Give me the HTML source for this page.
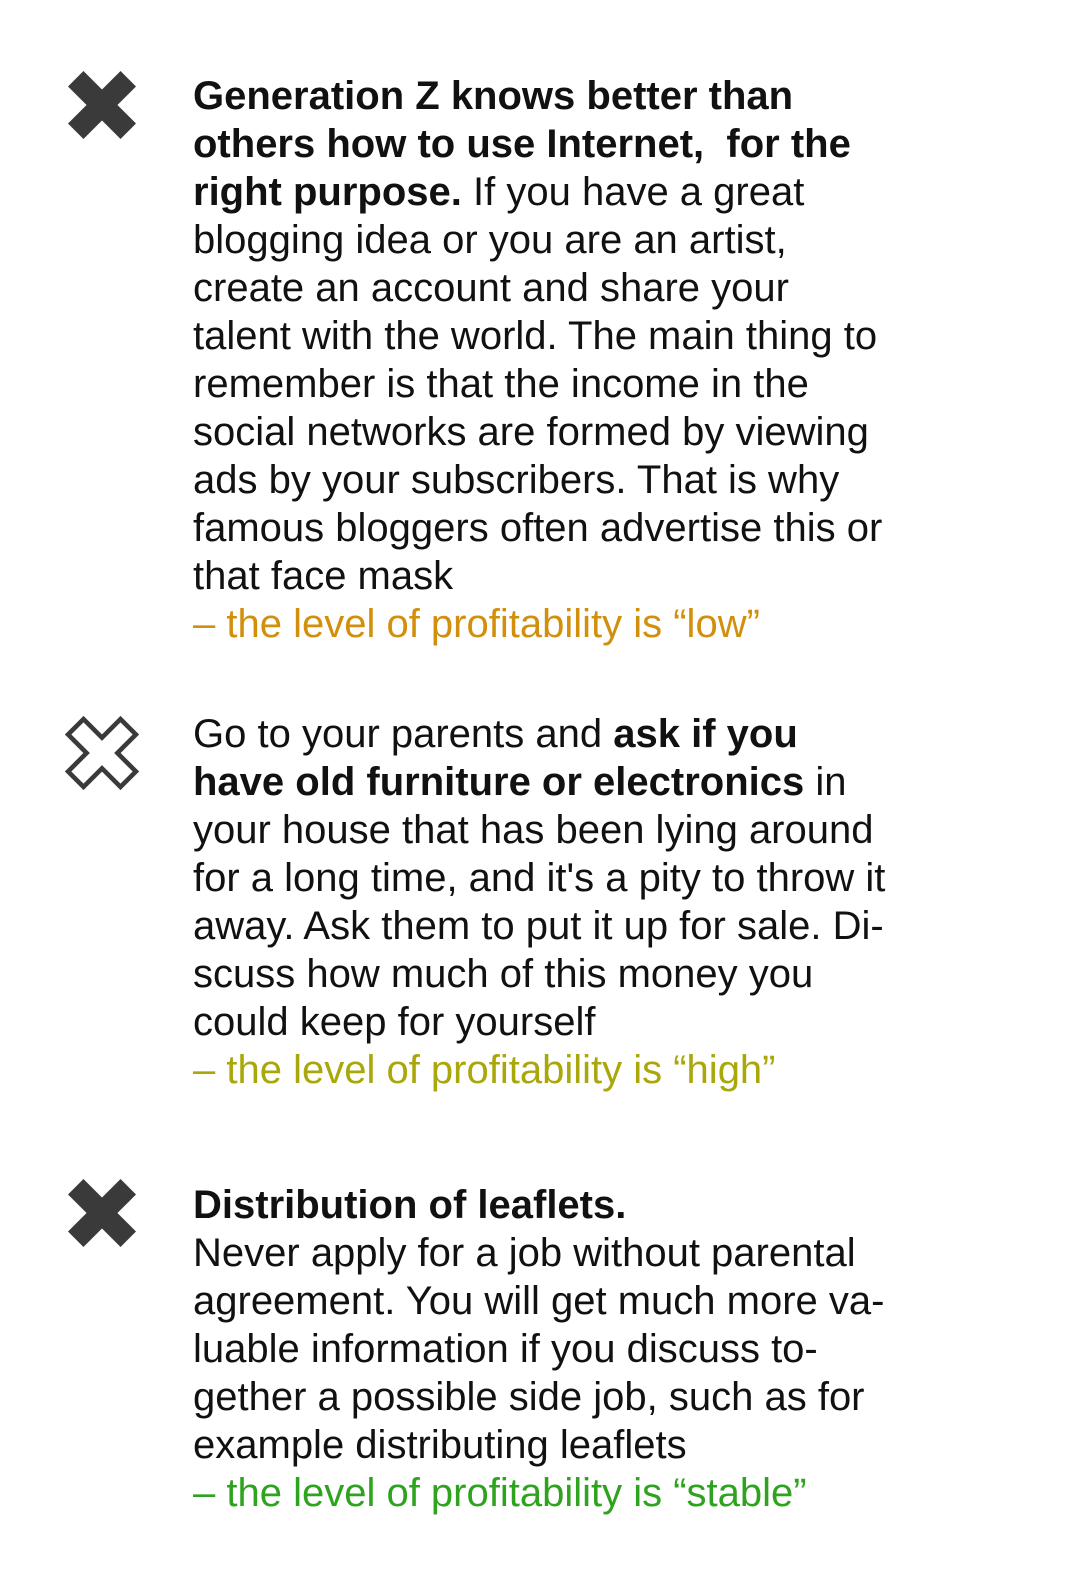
<!DOCTYPE html>
<html><head><style>
body{margin:0;width:1080px;height:1594px;background:#fff;position:relative;font-family:"Liberation Sans",Arial,sans-serif;color:#111}
.t{position:absolute;left:193px;font-size:40px;line-height:48px;white-space:nowrap}
b{font-weight:bold}
.o{color:#d18f0c}.y{color:#a9a70a}.g{color:#2ea31e}
svg{position:absolute}
</style></head><body>
<svg style="left:68px;top:71px" width="68" height="68" viewBox="0 0 66 66"><polygon fill="#3a3a3a" points="15,0 33,18 51,0 66,15 48,33 66,51 51,66 33,48 15,66 0,51 18,33 0,15"/></svg>
<svg style="left:64px;top:715px" width="76" height="76" viewBox="-4 -4 74 74"><polygon fill="none" stroke="#3a3a3a" stroke-width="4.5" stroke-linejoin="miter" points="15,0 33,18 51,0 66,15 48,33 66,51 51,66 33,48 15,66 0,51 18,33 0,15"/></svg>
<svg style="left:68px;top:1179px" width="68" height="68" viewBox="0 0 66 66"><polygon fill="#3a3a3a" points="15,0 33,18 51,0 66,15 48,33 66,51 51,66 33,48 15,66 0,51 18,33 0,15"/></svg>
<div class="t" style="top:72px"><b>Generation Z knows better than<br>others how to use Internet,&nbsp; for the<br>right purpose.</b> If you have a great<br>blogging idea or you are an artist,<br>create an account and share your<br>talent with the world. The main thing to<br>remember is that the income in the<br>social networks are formed by viewing<br>ads by your subscribers. That is why<br>famous bloggers often advertise this or<br>that face mask<br><span class="o">– the level of profitability is “low”</span></div>
<div class="t" style="top:710px">Go to your parents and <b>ask if you<br>have old furniture or electronics</b> in<br>your house that has been lying around<br>for a long time, and it's a pity to throw it<br>away. Ask them to put it up for sale. Di-<br>scuss how much of this money you<br>could keep for yourself<br><span class="y">– the level of profitability is “high”</span></div>
<div class="t" style="top:1181px"><b>Distribution of leaflets.</b><br>Never apply for a job without parental<br>agreement. You will get much more va-<br>luable information if you discuss to-<br>gether a possible side job, such as for<br>example distributing leaflets<br><span class="g">– the level of profitability is “stable”</span></div>
</body></html>
